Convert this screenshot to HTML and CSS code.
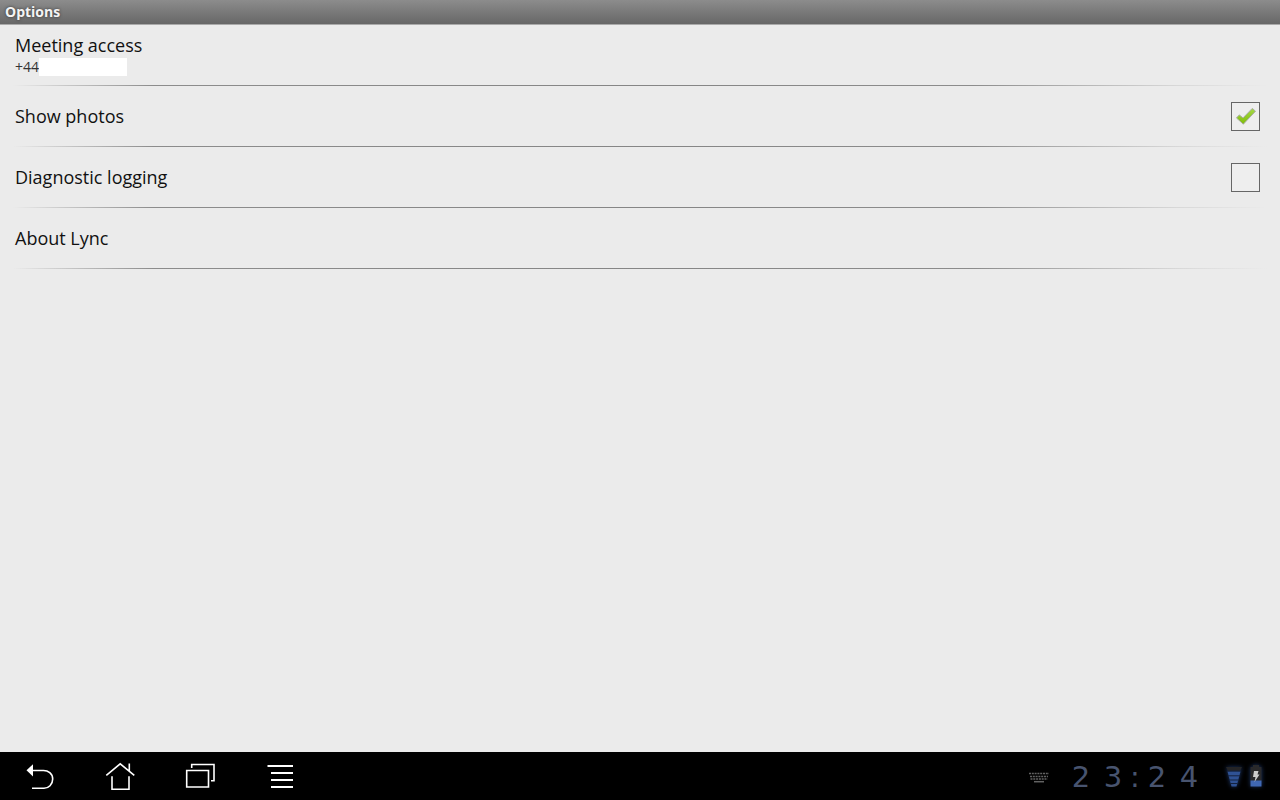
FILE: index.html
```html
<!DOCTYPE html>
<html lang="en">
<head>
<meta charset="utf-8">
<meta name="viewport" content="width=device-width, initial-scale=1">
<title>Options</title>
<link rel="stylesheet" href="styles.css">
</head>
<body>
<header class="title-bar"><h1 class="title">Options</h1></header>
<main class="options">
  <div class="row">
    <div class="row-text">
      <label class="label" for="phone">Meeting access</label>
      <div class="phone"><span>+44</span><input class="phone-input" id="phone" type="text"></div>
    </div>
  </div>
  <div class="row">
    <label class="label" for="photos">Show photos</label>
    <span class="check">
      <input class="check-input" id="photos" type="checkbox" checked>
      <svg class="tick" viewBox="0 0 29 29" aria-hidden="true">
        <defs><linearGradient id="green" x1="0" y1="0" x2="0" y2="1"><stop offset="0" stop-color="#a6d84a"/><stop offset="1" stop-color="#7fbd08"/></linearGradient></defs>
        <path d="M5.5 15.9 8.3 12.9 12 15.9 21.3 6.4 24.5 9.2 12.3 22.2Z" fill="url(#green)" stroke="#a9ada3" stroke-width="1" stroke-linejoin="round"/>
      </svg>
    </span>
  </div>
  <div class="row">
    <label class="label" for="logging">Diagnostic logging</label>
    <span class="check"><input class="check-input" id="logging" type="checkbox"></span>
  </div>
  <div class="row"><a class="label" href="#about">About Lync</a></div>
</main>
<footer class="system-bar">
  <nav class="nav">
    <button class="nav-button" type="button" aria-label="Back">
      <svg class="nav-icon" viewBox="0 0 32 32"><path d="M8 10.5H19.5C24 10.5 28.7 13.5 28.7 19S24.5 28.3 20 28.3H8" stroke-width="1.6"/><path d="M2.5 10.3 9 4.3V16.5Z" fill="#fff" stroke="none"/></svg>
    </button>
    <button class="nav-button" type="button" aria-label="Home">
      <svg class="nav-icon" viewBox="0 0 32 32"><path d="M2.3 15.3 16.2 3.9 30.3 15.3M25.3 11V3.5M8 16.3V29.2H25V16.3" stroke-width="1.6"/></svg>
    </button>
    <button class="nav-button" type="button" aria-label="Recent apps">
      <svg class="nav-icon" viewBox="0 0 32 32"><path d="M2.7 10.5H24.5V27H2.7ZM7.7 8V4.5H30V20.7H27" stroke-width="1.6"/></svg>
    </button>
    <button class="nav-button" type="button" aria-label="Menu">
      <svg class="nav-icon" viewBox="0 0 32 32"><path d="M3.5 6H29M7 13H29M7 20H29M7 27H29" stroke-width="2"/></svg>
    </button>
  </nav>
  <div class="status">
    <button class="keyboard" type="button" aria-label="Keyboard">
      <svg class="keyboard-icon" viewBox="0 0 20 11"><g fill="none" stroke="#626262" stroke-width="1.5"><path d="M0 1.5H20M1 4.5H19M1.5 7H18.5" stroke-dasharray="2 .8"/><path d="M5 9.7H15"/></g></svg>
    </button>
    <time class="clock"><span>2</span><span>3</span><span>:</span><span>2</span><span>4</span></time>
    <svg class="signal" viewBox="0 0 18 24" role="img" aria-label="Signal">
      <path d="M1 3H17L15 7H3Z" fill="#242426"/><path d="M2.5 7.5H15.5L11.5 22.5H6.5Z" fill="#2f5294"/><path d="M2 7H16M3 11.8H15M4 16H14M5 19.5H13" stroke="#14223f" stroke-width="1"/>
    </svg>
    <svg class="battery" viewBox="0 0 14 24" role="img" aria-label="Battery charging">
      <path d="M4 1H10V3H12.5V17H1.5V3H4Z" fill="#29292b"/><path d="M1.5 16.5H12.5V22.5H1.5Z" fill="#4068b4"/><path d="M5 7H9.5L8.5 10.5H10.5L5.5 18 6.5 13H4Z" fill="#ccc"/>
    </svg>
  </div>
</footer>
</body>
</html>
```
FILE: styles.css
```css
* { box-sizing: border-box; }
body {
  margin: 0;
  min-height: 100vh;
  display: flex;
  flex-direction: column;
  background: #ebebeb;
  color: #1c1c1c;
  font-family: "Open Sans", "Noto Sans", sans-serif;
}
.title-bar {
  height: 25px;
  padding: 0 5px;
  background: linear-gradient(#8c8c8c, #676767);
  border-bottom: 1px solid #aaa;
}
.title {
  margin: 0;
  font-size: 14px;
  line-height: 24px;
  font-weight: 700;
  color: #f4f4f4;
  text-shadow: 0 0 3px #333;
}
.options { flex: 1; }
.row {
  min-height: 61px;
  padding: 0 20px 0 15px;
  display: flex;
  align-items: center;
  justify-content: space-between;
  background: linear-gradient(90deg, transparent 1%, #8c8c8c 12%, #858585 50%, #8c8c8c 76%, #d8d8d8 92%, transparent 99%) bottom / 100% 1px no-repeat;
}
.row-text { padding-bottom: 3px; }
.label {
  display: block;
  margin-bottom: 1px;
  font-size: 18px;
  line-height: 24px;
  color: #111;
  text-decoration: none;
}
.phone {
  display: flex;
  align-items: center;
  font-size: 14px;
  line-height: 18px;
  color: #333;
}
.phone-input {
  width: 88px;
  height: 18px;
  padding: 0;
  border: 0;
  background: #fff;
  font: inherit;
}
.check {
  position: relative;
  width: 29px;
  height: 29px;
}
.check-input {
  appearance: none;
  display: block;
  width: 100%;
  height: 100%;
  margin: 0;
  border: 1px solid #666;
  background: #eee;
}
.tick {
  position: absolute;
  inset: 0;
  pointer-events: none;
}
.check-input:not(:checked) + .tick { display: none; }
.system-bar {
  height: 48px;
  display: flex;
  align-items: center;
  justify-content: space-between;
  background: #000;
}
.nav { display: flex; }
.nav-button {
  width: 80px;
  height: 48px;
  padding: 0;
  border: 0;
  background: none;
}
.nav-icon {
  display: block;
  width: 32px;
  height: 32px;
  margin: 0 auto;
  fill: none;
  stroke: #fff;
}
.status {
  display: flex;
  align-items: center;
  padding-right: 17px;
}
.keyboard {
  padding: 2px 0 0;
  border: 0;
  margin-right: 20px;
  background: none;
}
.keyboard-icon { display: block; width: 20px; height: 11px; }
.clock {
  display: grid;
  grid-template-columns: 24px 24px 4px 24px 24px;
  gap: 8px;
  padding-top: 2px;
  margin-right: 24px;
  font-family: "DejaVu Sans", sans-serif;
  font-size: 29px;
  line-height: 32px;
  color: #48546f;
}
.clock span {
  display: flex;
  justify-content: center;
}
.signal { width: 18px; height: 24px; margin-right: 6px; filter: drop-shadow(0 0 2px #1c3566); }
.battery { width: 14px; height: 24px; filter: drop-shadow(0 0 2px #1c3566); }
```
